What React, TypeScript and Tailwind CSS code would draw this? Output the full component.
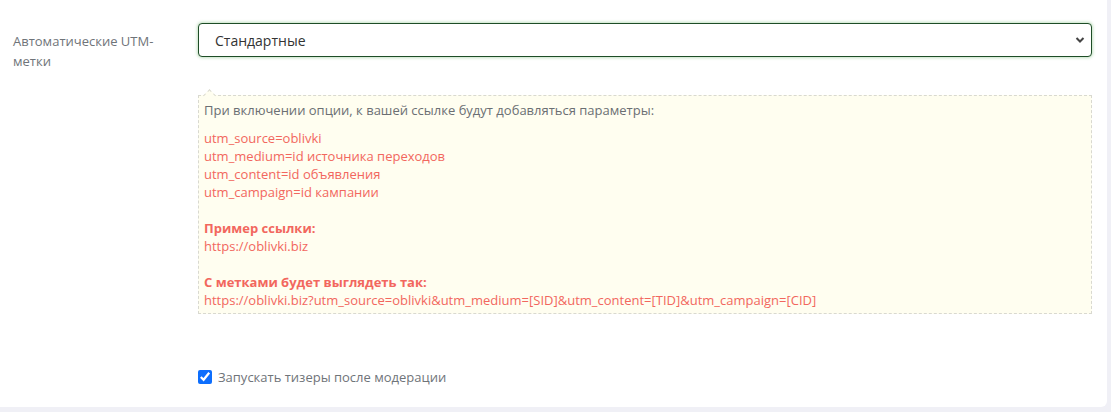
import React from "react";

const font = { fontFamily: '"Open Sans", "Liberation Sans", sans-serif' };

const params = [
  "utm_source=oblivki",
  "utm_medium=id источника переходов",
  "utm_content=id объявления",
  "utm_campaign=id кампании",
];

export default function App() {
  return (
    <div className="min-h-[412px] w-[1111px] bg-[#f0f0f6]" style={font}>
      <div className="h-[407px] w-[1107px] rounded-br-md bg-white">
        <div className="flex pt-[23px]">
          {/* label column */}
          <div className="w-[198px] shrink-0 pl-[13px] pr-4 pt-[8px] text-[13px] leading-[20px] text-[#6f7479]">
            Автоматические UTM-
            <br />
            метки
          </div>

          <div className="w-[894px] shrink-0">
            <div className="relative">
              <select
                defaultValue="std"
                className="h-[34px] w-full appearance-none rounded-[4px] border border-[#1e4d27] bg-white pl-4 text-[14px] text-[#333] shadow-[0_0_3px_1px_rgba(80,170,80,0.35)] outline-none"
                style={font}
              >
                <option value="std">Стандартные</option>
              </select>
              <svg
                className="pointer-events-none absolute right-[7px] top-[13px]"
                width="10"
                height="8"
                viewBox="0 0 10 8"
              >
                <path d="M1.5 2l3.5 3.5L8.5 2" fill="none" stroke="#444" strokeWidth="2" />
              </svg>
            </div>

            {/* hint box */}
            <div className="relative mt-[38px] border border-dashed border-[#d9d9d0] bg-[#fffef0] px-[5px] pb-[4px] pt-[5px] text-[13px] leading-[18px]">
              <div className="absolute left-[6px] top-[-5px] h-[9px] w-[9px] rotate-45 border-l border-t border-dashed border-[#d9d9d0] bg-[#fffef0]" />
              <p className="mb-[10px] text-[#6b6f73]">
                При включении опции, к вашей ссылке будут добавляться параметры:
              </p>
              <div className="text-[#f2675e]">
                {params.map((p) => (
                  <div key={p}>{p}</div>
                ))}
                <div className="h-[18px]" />
                <div className="font-bold">Пример ссылки:</div>
                <div>https://oblivki.biz</div>
                <div className="h-[18px]" />
                <div className="font-bold">С метками будет выглядеть так:</div>
                <div>
                  https://oblivki.biz?utm_source=oblivki&amp;utm_medium=[SID]&amp;utm_content=[TID]&amp;utm_campaign=[CID]
                </div>
              </div>
            </div>

            <label className="mt-[53px] flex items-center gap-[6px] text-[13px] leading-[20px] text-[#6f7479]">
              <input
                type="checkbox"
                defaultChecked
                className="h-[14px] w-[14px] accent-[#0d6efd]"
              />
              Запускать тизеры после модерации
            </label>
          </div>
        </div>
      </div>
    </div>
  );
}
